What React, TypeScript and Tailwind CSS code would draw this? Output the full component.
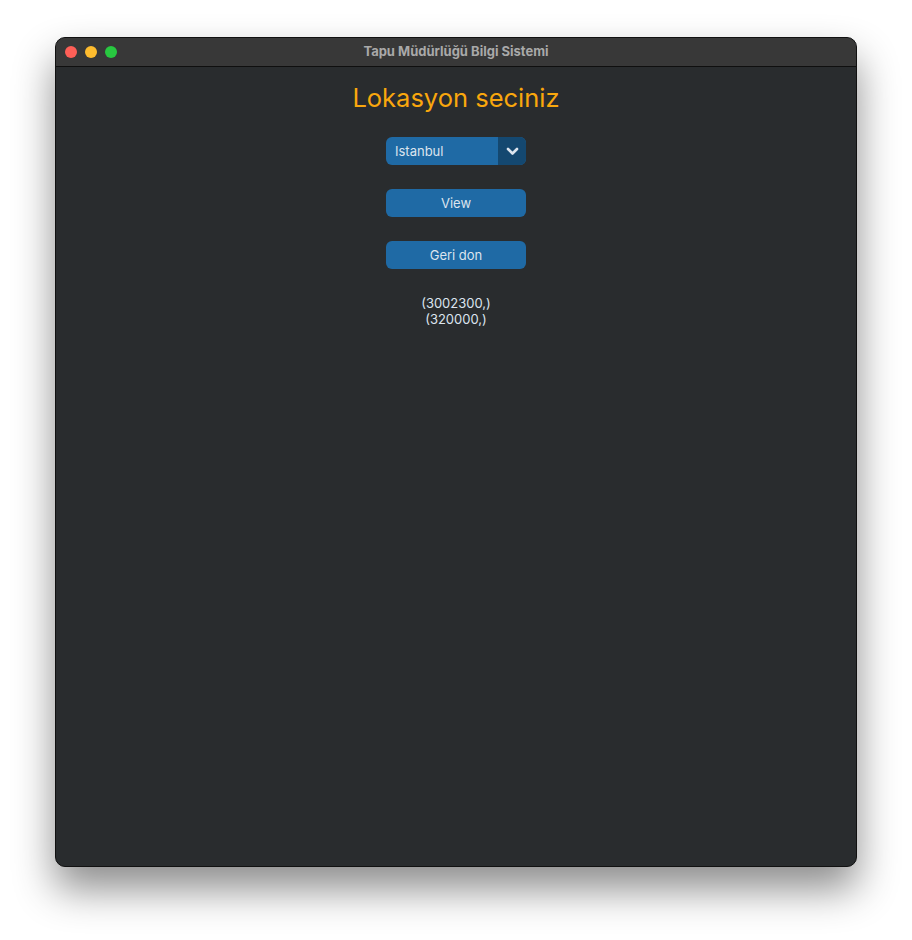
import { useState } from "react";

const locations = ["Istanbul", "Ankara", "Izmir"];

const Chevron = () => (
    <svg width="13" height="9" viewBox="0 0 13 9" fill="none">
        <path d="M2 2l4.5 4.5L11 2" stroke="#dce4ee" strokeWidth="2.6" strokeLinecap="round" strokeLinejoin="round" />
    </svg>
);

const TrafficLights = () => (
    <div className="absolute left-[9px] top-0 h-full flex items-center gap-[8px]">
        <span className="w-[12px] h-[12px] rounded-full bg-[#fe5f57]" />
        <span className="w-[12px] h-[12px] rounded-full bg-[#febc2e]" />
        <span className="w-[12px] h-[12px] rounded-full bg-[#28c840]" />
    </div>
);

const CtkButton = ({ label }: { label: string }) => (
    <button className="w-[140px] h-[28px] pt-[2px] rounded-[6px] bg-[#1f6aa5] text-[13px] text-[#dce4ee] flex items-center justify-center">
        {label}
    </button>
);

export default function App() {
    const [location] = useState(locations[0]);

    return (
        <div className="w-[912px] h-[940px] bg-white pt-[37px] pl-[55px] font-['Inter','Noto_Sans',sans-serif]">
            <div className="w-[802px] h-[830px] rounded-[10px] border border-[#111] bg-[#292c2e] overflow-hidden shadow-[0_22px_40px_rgba(0,0,0,0.45)] flex flex-col">
                <div className="relative h-[29px] shrink-0 bg-[#383838] border-b border-[#0f0f0f] flex items-center justify-center">
                    <TrafficLights />
                    <span className="text-[13px] font-bold text-[#a9a9a9]">Tapu Müdürlüğü Bilgi Sistemi</span>
                </div>

                <div className="flex flex-col items-center pt-[13px]">
                    <h1 className="text-[25.5px] leading-[36px] text-[#f9a70d]">Lokasyon seciniz</h1>

                    <div className="mt-[21px] w-[140px] h-[28px] rounded-[6px] bg-[#1f6aa5] flex overflow-hidden">
                        <span className="flex-1 pl-[9px] pt-[2px] flex items-center text-[13px] text-[#dce4ee]">{location}</span>
                        <span className="w-[28px] bg-[#144870] flex items-center justify-center">
                            <Chevron />
                        </span>
                    </div>

                    <div className="mt-[24px]">
                        <CtkButton label="View" />
                    </div>
                    <div className="mt-[24px]">
                        <CtkButton label="Geri don" />
                    </div>

                    <div className="mt-[26px] flex flex-col items-center text-[13px] leading-[16px] text-[#dce4ee]">
                        <span>(3002300,)</span>
                        <span>(320000,)</span>
                    </div>
                </div>
            </div>
        </div>
    );
}
